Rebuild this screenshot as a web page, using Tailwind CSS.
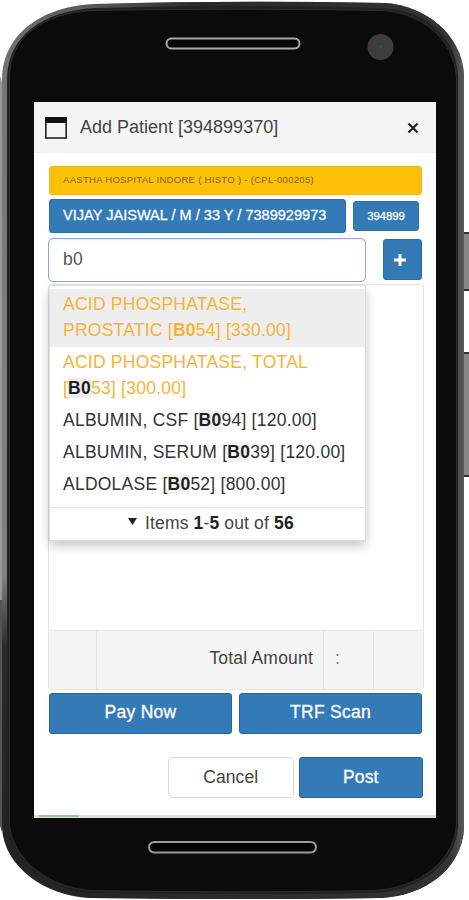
<!DOCTYPE html>
<html lang="en">
<head>
    <meta charset="UTF-8">
    <meta name="viewport" content="width=device-width, initial-scale=1.0">
    <title>Add Patient</title>
    <script src="https://cdn.jsdelivr.net/npm/@tailwindcss/browser@4"></script>
</head>
<body class="bg-white w-[469px] h-[900px] overflow-hidden font-['Liberation_Sans',Arial,sans-serif] text-[17.5px] text-[#444]">
    <div class="relative w-[469px] h-[900px] pt-[102px] pl-[34px]">

        <!-- Phone body -->
        <svg class="absolute inset-0 -z-10" width="469" height="900" viewBox="0 0 469 900">
            <defs>
                <linearGradient id="edge" x1="0" y1="0" x2="0" y2="1">
                    <stop offset="0" stop-color="#6a6a6a"/>
                    <stop offset="0.1" stop-color="#777"/>
                    <stop offset="0.64" stop-color="#808080"/>
                    <stop offset="0.72" stop-color="#2a2a2a"/>
                    <stop offset="1" stop-color="#222"/>
                </linearGradient>
                <linearGradient id="side" x1="0" y1="0" x2="1" y2="0">
                    <stop offset="0" stop-color="#2c2c2c" stop-opacity="0"/>
                    <stop offset="0.2" stop-color="#2c2c2c" stop-opacity="0.3"/>
                    <stop offset="0.42" stop-color="#2a2a2a"/>
                    <stop offset="0.97" stop-color="#333"/>
                    <stop offset="1" stop-color="#5a5a5a"/>
                </linearGradient>
            </defs>
            <rect x="462" y="233" width="9" height="57" fill="#888"/>
            <path d="M464 233h5M464 290h5" stroke="#333" stroke-width="2"/>
            <rect x="462" y="352" width="9" height="125" fill="#888"/>
            <path d="M464 353h5M464 476h5" stroke="#333" stroke-width="2"/>
            <path d="M0 76Q4 84 4 110V600H0Z" fill="#999"/>
            <path d="M0 600H4V820L2 832L0 826Z" fill="#555"/>
            <path d="M2 78C3 34 42 6 95 4Q235 0 385 3C426 6 461 34 464 74V828C462 868 426 896 380 898Q235 900 90 898C44 896 4 866 2 828Z" fill="url(#edge)"/>
            <path d="M2 78C3 34 42 6 95 4Q235 0 385 3C426 6 461 34 464 74V828C462 868 426 896 380 898Q235 900 90 898C44 896 4 866 2 828Z" fill="url(#side)"/>
            <path d="M7 78C8 36 42 11 95 8Q235 4 383 8C424 10 456 36 458 76V826C456 864 420 890 376 893Q235 895 92 893C48 890 9 862 7 826Z" fill="#222"/>
            <path d="M9.500 78C10 36 42 13 95 10.500Q235 8 380 10.500C420 12 454 38 456.500 78V824C454 862 418 888 374 890.500Q235 893 92 890.500C50 888 12 860 9.500 824Z" fill="#0b0b0b" stroke="#333" stroke-width="0.700"/>
            <rect x="166.500" y="38.500" width="133" height="10" rx="5" fill="#050505" stroke="#aaa" stroke-width="2"/>
            <circle cx="380.500" cy="47" r="13" fill="#3d3d3d"/>
            <circle cx="380.500" cy="46.500" r="1.300" fill="#175a7c"/>
            <rect x="149" y="842" width="167" height="10.500" rx="5.200" fill="#050505" stroke="#999" stroke-width="2"/>
        </svg>

        <!-- Screen -->
        <div class="w-[402px] h-[716px] bg-white flex flex-col">
            <header class="h-[51px] shrink-0 bg-[#f5f5f5] border-b border-[#eee] flex items-center pl-[11px] pr-[17px]">
                <svg class="mt-px" width="22" height="22" viewBox="0 0 22 22">
                    <rect x="0.800" y="1" width="20.400" height="20" fill="none" stroke="#222" stroke-width="1.600"/>
                    <path d="M0 0h22v6H0z" fill="#111"/>
                </svg>
                <h1 class="ml-[13px] -mt-px text-[18px] leading-6">Add Patient [394899370]</h1>
                <svg class="ml-auto mt-px" width="12" height="12" viewBox="0 0 12 12">
                    <path d="M1.500 1.500l9 9M10.500 1.500l-9 9" stroke="#222" stroke-width="2.200"/>
                </svg>
            </header>

            <main class="flex flex-col pl-[15px] pr-[13px] pt-[13px]">
                <div class="w-[373px] h-[29px] rounded-[3px] bg-[#ffc107] border border-[#e8b630] flex items-center pl-[13px] text-[9.5px] tracking-[0.3px] text-[#7a6410]">AASTHA HOSPITAL INDORE ( HISTO ) - (CPL-000205)</div>

                <div class="mt-1 h-[34px] flex items-center gap-[7px]">
                    <div class="w-[297px] h-[34px] rounded-[3px] bg-[#337ab7] border border-[#2e6da4] flex items-center pl-[13px] text-[14.5px] tracking-[0.03px] text-white [-webkit-text-stroke:0.3px_white] whitespace-nowrap">VIJAY JAISWAL / M / 33 Y / 7389929973</div>
                    <div class="w-[66px] h-[30px] rounded-[3px] bg-[#337ab7] border border-[#2e6da4] flex items-center justify-center text-[11.300px] text-white [-webkit-text-stroke:0.3px_white]">394899</div>
                </div>

                <div class="mt-[5px] -ml-px h-[44px] flex items-center">
                    <div class="w-[318px] h-[44px] rounded-[5px] bg-white border border-[#8aa8d8] shadow-[inset_0_1px_2px_#0001] flex items-center pl-[14px] pb-px text-[#555] tracking-[0.25px]">b0</div>
                    <button class="-mt-px ml-[17px] w-[39px] h-[41px] rounded-[3px] bg-[#337ab7] border border-[#2e6da4] flex items-center justify-center pr-[5px]">
                        <svg width="12" height="12" viewBox="0 0 12 12"><path d="M6 0v12M0 6h12" stroke="#fff" stroke-width="3"/></svg>
                    </button>
                </div>

                <div class="relative mt-[2px] -ml-px w-[376px] h-[406px] rounded-[3px] border border-[#e4e4e4] flex flex-col justify-end">
                    <div class="h-[59px] bg-[#f5f5f5] border-t border-[#e4e4e4] flex leading-[54px]">
                        <div class="w-[48px] border-r border-[#e2e2e2]"></div>
                        <div class="w-[227px] border-r border-[#e2e2e2] text-right pr-[10px] tracking-[0.2px]">Total Amount</div>
                        <div class="w-[50px] border-r border-[#e2e2e2] pl-[11px] text-[#777]">:</div>
                    </div>

                    <!-- Test suggestions -->
                    <div class="absolute left-0 top-0 w-[317px] h-[256px] bg-white border border-[#ddd] shadow-[0_5px_10px_rgba(0,0,0,0.22)] pt-[3px] leading-[26px] flex flex-col">
                        <ul class="text-[#333] whitespace-nowrap tracking-[0.24px]">
                            <li class="h-[58px] py-[2px] pl-[13px] bg-[#eee] text-[#f9b233]">ACID PHOSPHATASE,<br>PROSTATIC [<b>B0</b>54] [330.00]</li>
                            <li class="h-[58px] py-[2px] pl-[13px] text-[#f9b233]">ACID PHOSPHATASE, TOTAL<br>[<b class="bg-[#eee] text-[#222]">B0</b>53] [300.00]</li>
                            <li class="h-[32px] py-[2px] pl-[13px]">ALBUMIN, CSF [<b class="bg-[#f2f2f2] text-[#222]">B0</b>94] [120.00]</li>
                            <li class="h-[32px] py-[2px] pl-[13px]">ALBUMIN, SERUM [<b class="bg-[#f2f2f2] text-[#222]">B0</b>39] [120.00]</li>
                            <li class="h-[32px] py-[2px] pl-[13px]">ALDOLASE [<b class="bg-[#f2f2f2] text-[#222]">B0</b>52] [800.00]</li>
                        </ul>
                        <div class="mt-auto h-[33px] border-t border-[#e5e5e5] flex items-center pl-[78px] pb-[2px] whitespace-pre tracking-[0.15px]">
                            <svg class="mr-[8px] mb-1" width="9" height="7" viewBox="0 0 9 7"><path d="M0 0h9L4.500 7z" fill="#222"/></svg>Items <b class="text-[#222]">1</b>-<b class="text-[#222]">5</b> out of <b class="text-[#222]">56</b>
                        </div>
                    </div>
                </div>

                <div class="mt-[3px] flex gap-[7px] text-white tracking-[0.25px] [-webkit-text-stroke:0.3px_white]">
                    <button class="w-[183px] h-[41px] rounded-[3px] bg-[#337ab7] border border-[#1f65a3] pb-[2px]">Pay Now</button>
                    <button class="w-[183px] h-[41px] rounded-[3px] bg-[#337ab7] border border-[#1f65a3] pb-[2px]">TRF Scan</button>
                </div>
                <div class="mt-[23px] ml-[119px] flex gap-[5px] tracking-[0.1px]">
                    <button class="w-[126px] h-[41px] rounded-[5px] border border-[#d8d8d8] pb-px">Cancel</button>
                    <button class="w-[125px] h-[41px] rounded-[3px] bg-[#337ab7] border border-[#1f65a3] text-white [-webkit-text-stroke:0.3px_white] pb-px">Post</button>
                </div>
            </main>

            <div class="mt-auto h-[3px] bg-[#ddd] pl-[5px]">
                <div class="w-[40px] h-[2px] bg-[#8fc7a5]"></div>
            </div>
        </div>
    </div>
</body>
</html>
